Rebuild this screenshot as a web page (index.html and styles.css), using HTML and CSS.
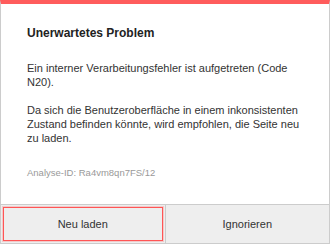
FILE: index.html
```html
<!DOCTYPE html>
<html lang="de">
<head>
  <meta charset="UTF-8" />
  <meta name="viewport" content="width=device-width, initial-scale=1.0"/>
  <title>Unerwartetes Problem</title>
  <link rel="stylesheet" href="styles.css">
</head>
<body>
  <div class="dialog">
    <div class="dialog-content">
      <h1 class="dialog-title">Unerwartetes Problem</h1>
      <p>Ein interner Verarbeitungsfehler ist aufgetreten (Code N20).</p>
      <p>Da sich die Benutzeroberfläche in einem inkonsistenten Zustand befinden könnte, wird empfohlen, die Seite neu zu laden.</p>
      <p class="analysis-id">Analyse-ID: Ra4vm8qn7FS/12</p>
    </div>
    <div class="dialog-buttons">
      <button class="dialog-button focused">Neu laden</button>
      <button class="dialog-button">Ignorieren</button>
    </div>
  </div>
</body>
</html>
```

FILE: styles.css
```css
* {
  margin: 0;
  padding: 0;
  box-sizing: border-box;
  font-family: "Liberation Sans", Arial, sans-serif;
}

body {
  background: #fff;
  width: 330px;
  height: 244px;
  overflow: hidden;
}

.dialog {
  width: 330px;
  height: 244px;
  border: 1px solid #ccc;
  border-top: 4px solid #ff5c5c;
  display: flex;
  flex-direction: column;
  background: #fff;
}

.dialog-content {
  flex: 1;
  padding: 22px 20px 0 26px;
  color: #333;
  font-size: 11px;
  line-height: 14px;
}

.dialog-title {
  font-size: 12px;
  line-height: 15px;
  font-weight: bold;
  color: #222;
  margin-bottom: 20px;
}

.dialog-content p {
  margin-bottom: 14px;
}

.dialog-content p.analysis-id {
  margin-top: 22px;
  font-size: 9.5px;
  line-height: 12px;
  color: #999;
}

.dialog-buttons {
  display: flex;
  height: 39px;
  border-top: 1px solid #ccc;
  background: #eee;
}

.dialog-button {
  flex: 1;
  border: none;
  background: #eee;
  color: #333;
  font-size: 11px;
  cursor: pointer;
}

.dialog-button + .dialog-button {
  border-left: 1px solid #ccc;
}

.dialog-button.focused {
  outline: 1.5px solid #f55;
  outline-offset: -3px;
  box-shadow: inset 0 0 0 1px #eee, inset 0 0 0 3px rgba(255, 90, 90, 0.25);
}
```
